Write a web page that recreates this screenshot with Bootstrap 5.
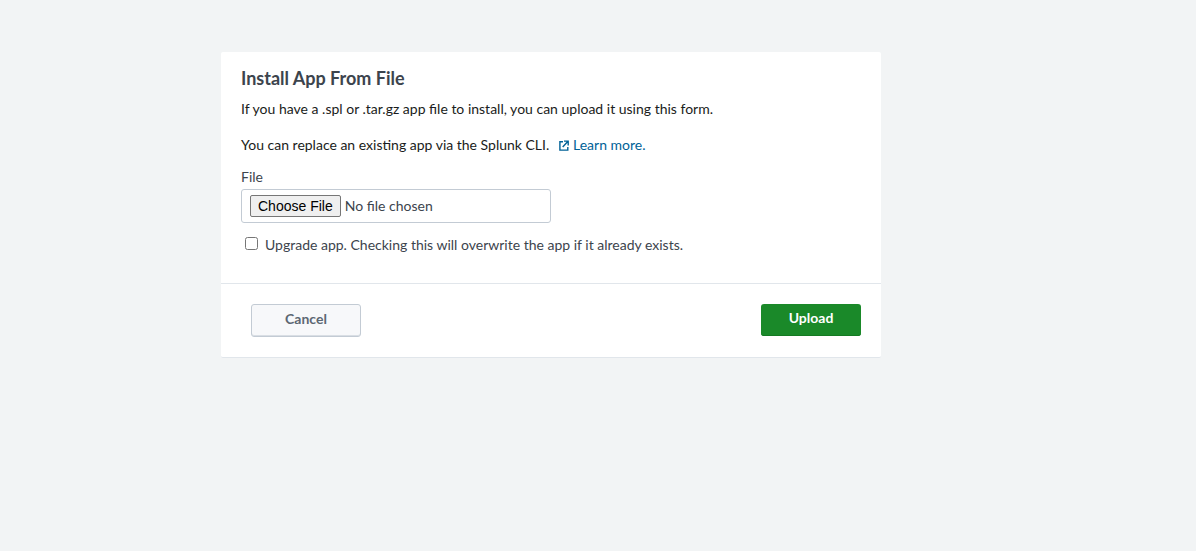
<!DOCTYPE html>
<html lang="en">
<head>
<meta charset="utf-8">
<meta name="viewport" content="width=device-width, initial-scale=1">
<title>Install App From File</title>
<link href="https://cdn.jsdelivr.net/npm/bootstrap@5.3.0/dist/css/bootstrap.min.css" rel="stylesheet">
<style>
  body { background: #f2f4f5; color: #1a1c20; font-family: Lato, "Liberation Sans", sans-serif; font-size: 14px; line-height: 20px; }
  .page { padding: 52px 94px 52px 0; }
  .panel { max-width: 660px; background: #fff; border-bottom: 1px solid #e1e6eb; border-radius: 2px; }
  .panel-main { padding: 16px 20px 28px; }
  .panel-title { font-size: 18px; line-height: 20px; font-weight: 700; color: #3c444d; margin-bottom: 11px; }
  .intro { margin-bottom: 16px; }
  .learn { color: #006297; text-decoration: none; margin-left: 3px; }
  .learn:hover { text-decoration: underline; }
  .learn svg { vertical-align: -1px; }
  .field-label, .check-label { color: #3c444d; }
  .field-label { margin-bottom: 2px; }
  .file-input { width: 310px; height: 34px; max-width: 100%; padding: 5px 8px; border: 1px solid #c3cbd4; border-radius: 3px; color: #3c444d; }
  .file-input::file-selector-button { font: 14px/16px "Liberation Sans", Arial, sans-serif; color: #000; background: #efefef; border: 1px solid #767676; border-radius: 2px; padding: 2px 7px; margin-right: 4px; }
  .upgrade-check { width: 13px; height: 13px; margin: 2px 7px 0 4px; }
  .panel-actions { padding: 20px 20px 20px 30px; border-top: 1px solid #e1e6eb; }
  .panel-actions .btn { font-size: 14px; line-height: 20px; font-weight: 700; border-radius: 3px; }
  .btn-cancel, .btn-cancel:hover { width: 110px; height: 33px; padding: 4px 6px 7px; color: #5c6773; background: #f7f8fa; border: 1px solid #c3cbd4; box-shadow: inset 0 -1px 0 #d9dee4; }
  .btn-upload, .btn-upload:hover { width: 100px; height: 32px; padding: 4px 6px 8px; color: #fff; background: #1a8929; border: 0; box-shadow: inset 0 -1px 0 #147a22; }
</style>
</head>
<body>
<main class="page">
  <form class="panel mx-auto">
    <div class="panel-main">
      <h1 class="panel-title">Install App From File</h1>
      <p class="intro">If you have a .spl or .tar.gz app file to install, you can upload it using this form.</p>
      <p class="mb-2 pb-1">You can replace an existing app via the Splunk CLI.&nbsp; <a class="learn" href="#"><svg width="10" height="11" viewBox="0 0 10 11" fill="none" stroke="currentColor" stroke-width="1.4" aria-hidden="true"><path d="M4 1.7H.9v8.4h7.9V7M5 1.1h4.2v4.4M9 1.3 3.7 7"/></svg> Learn more.</a></p>
      <label class="field-label d-block" for="appfile">File</label>
      <input class="file-input d-block" type="file" id="appfile">
      <div class="d-flex align-items-start pt-2 mt-1">
        <input class="upgrade-check" type="checkbox" id="upgrade">
        <label class="check-label" for="upgrade">Upgrade app. Checking this will overwrite the app if it already exists.</label>
      </div>
    </div>
    <div class="panel-actions d-flex justify-content-between align-items-start">
      <button class="btn btn-cancel" type="button">Cancel</button>
      <button class="btn btn-upload" type="button">Upload</button>
    </div>
  </form>
</main>
<script src="https://cdn.jsdelivr.net/npm/bootstrap@5.3.0/dist/js/bootstrap.bundle.min.js"></script>
</body>
</html>
